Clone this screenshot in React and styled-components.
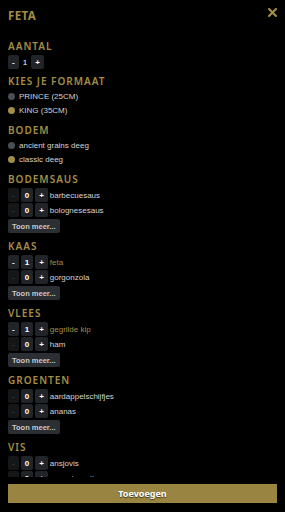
import React from 'react';
import styled, { createGlobalStyle } from 'styled-components';

const GOLD = '#a38d47';

const Global = createGlobalStyle`
  html, body {
    margin: 0;
    padding: 0;
    background: #000;
  }
  * {
    box-sizing: border-box;
  }
`;

const Modal = styled.div`
  height: 512px;
  display: flex;
  flex-direction: column;
  background: #000;
  font-family: 'Liberation Sans', Arial, sans-serif;
`;

const Header = styled.div`
  display: flex;
  justify-content: space-between;
  align-items: flex-start;
  padding: 8px 8px 0;
  height: 24px;
`;

const Title = styled.h1`
  margin: 0;
  font-family: 'Noto Sans', sans-serif;
  font-weight: 700;
  font-size: 11.5px;
  line-height: 16px;
  letter-spacing: 0.4px;
  color: ${GOLD};
`;

const Close = styled.svg`
  width: 9px;
  height: 9px;
  color: ${GOLD};
`;

const Body = styled.div`
  flex: 1;
  overflow: hidden;
  padding: 15px 8px 0;
`;

const Section = styled.section`
  margin-bottom: ${(p) => p.$gap || 6}px;
`;

const Heading = styled.h2`
  margin: 0 0 2px;
  font-family: 'Noto Sans', sans-serif;
  font-weight: 600;
  font-size: 10px;
  line-height: 14px;
  letter-spacing: 1px;
  color: ${GOLD};
`;

const Row = styled.div`
  display: flex;
  align-items: center;
  gap: 2px;
  height: 14px;
  margin-bottom: 1px;
`;

const Btn = styled.span`
  display: inline-flex;
  align-items: center;
  justify-content: center;
  height: 14px;
  padding: 0 4px;
  border-radius: 2px;
  background: ${(p) => (p.$off ? '#141618' : '#212529')};
  color: ${(p) => (p.$off ? '#3a3d40' : '#fff')};
  font-weight: 700;
  font-size: 8px;
`;

const Count = styled.span`
  padding: 0 ${(p) => (p.$boxed ? 4 : 2)}px;
  height: 14px;
  display: inline-flex;
  align-items: center;
  border-radius: 2px;
  background: ${(p) => (p.$boxed ? '#212529' : 'transparent')};
  color: #fff;
  font-size: 8px;
  font-weight: ${(p) => (p.$boxed ? 700 : 400)};
`;

const Label = styled.span`
  font-size: 8px;
  color: ${(p) => (p.$on ? GOLD : '#d4d4d4')};
`;

const Option = styled.div`
  display: flex;
  align-items: center;
  gap: 4px;
  height: 13px;
  margin-bottom: 1px;
`;

const Dot = styled.span`
  width: 7px;
  height: 7px;
  border-radius: 50%;
  background: ${(p) => (p.$on ? '#a38d47' : '#4a4f55')};
`;

const More = styled.div`
  display: flex;
  align-items: center;
  width: max-content;
  height: 14px;
  margin-top: 2px;
  padding: 0 4px;
  border-radius: 2px;
  background: #2b2f33;
  color: #c9c9c9;
  font-weight: 700;
  font-size: 7.5px;
`;

const Footer = styled.div`
  padding: 7px 8px 9px;
`;

const AddButton = styled.button`
  display: block;
  width: 100%;
  height: 19px;
  border: 0;
  border-radius: 0;
  background: #998441;
  color: #fff;
  font-family: 'Noto Sans', sans-serif;
  font-weight: 700;
  font-size: 9px;
  text-shadow: 0 1px 1px rgba(0, 0, 0, 0.6);
  padding: 0;
`;

const groups = [
  { name: 'BODEMSAUS', items: [['barbecuesaus', 0], ['bolognesesaus', 0]] },
  { name: 'KAAS', items: [['feta', 1], ['gorgonzola', 0]] },
  { name: 'VLEES', items: [['gegrilde kip', 1], ['ham', 0]] },
  { name: 'GROENTEN', items: [['aardappelschijfjes', 0], ['ananas', 0]] },
  { name: 'VIS', items: [['ansjovis', 0], ['gezoutenrotje', 0]] },
];

const Ingredient = ({ name, qty }) => (
  <Row>
    <Btn $off={qty === 0}>-</Btn>
    <Count $boxed>{qty}</Count>
    <Btn>+</Btn>
    <Label $on={qty > 0}>{name}</Label>
  </Row>
);

const Choice = ({ label, on }) => (
  <Option>
    <Dot $on={on} />
    <Label>{label}</Label>
  </Option>
);

export default function App() {
  return (
    <Modal>
      <Global />
      <Header>
        <Title>FETA</Title>
        <Close viewBox="0 0 10 10">
          <path d="M1.2 1.2 L8.8 8.8 M8.8 1.2 L1.2 8.8" stroke="currentColor" strokeWidth="2.4" strokeLinecap="square" />
        </Close>
      </Header>
      <Body>
        <Section $gap={5}>
          <Heading>AANTAL</Heading>
          <Row>
            <Btn>-</Btn>
            <Count>1</Count>
            <Btn>+</Btn>
          </Row>
        </Section>
        <Section>
          <Heading>KIES JE FORMAAT</Heading>
          <Choice label="PRINCE (25CM)" />
          <Choice label="KING (35CM)" on />
        </Section>
        <Section>
          <Heading>BODEM</Heading>
          <Choice label="ancient grains deeg" />
          <Choice label="classic deeg" on />
        </Section>
        {groups.map((g) => (
          <Section key={g.name}>
            <Heading>{g.name}</Heading>
            {g.items.map(([n, q]) => (
              <Ingredient key={n} name={n} qty={q} />
            ))}
            <More>Toon meer...</More>
          </Section>
        ))}
      </Body>
      <Footer>
        <AddButton>Toevoegen</AddButton>
      </Footer>
    </Modal>
  );
}
